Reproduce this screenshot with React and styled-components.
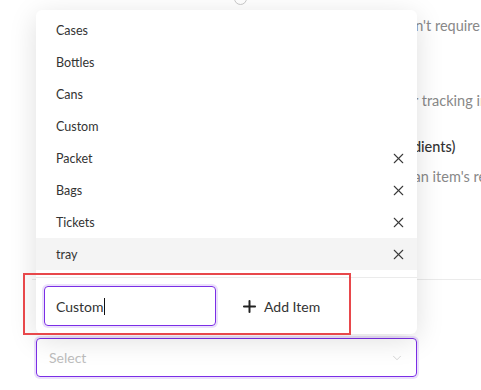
import React from "react";
import styled, { createGlobalStyle } from "styled-components";
import { X, Plus, ChevronDown } from "lucide-react";

const GlobalStyle = createGlobalStyle`
  body {
    margin: 0;
    background: #fff;
    font-family: "Lato", "Liberation Sans", sans-serif;
  }
`;

const Page = styled.div`
  position: relative;
  width: 481px;
  height: 390px;
  overflow: hidden;
  background: #fff;
`;

const Form = styled.div`
  display: flex;
  flex-direction: column;
  padding-left: 36px;
`;

const Radio = styled.div`
  width: 11px;
  height: 11px;
  margin: -8px 0 0 198px;
  border: 1.5px solid #c9c9c9;
  border-radius: 50%;
`;

const HintColumn = styled.div`
  display: flex;
  flex-direction: column;
  padding-left: 369px;
  white-space: nowrap;
`;

const Hint = styled.div`
  font-size: 14.5px;
  color: ${(p) => (p.$strong ? "#333" : "#888")};
  font-weight: ${(p) => (p.$strong ? 500 : 400)};
  margin-left: ${(p) => p.$shift || 0}px;
  margin-top: ${(p) => p.$gap || 0}px;
  line-height: 18px;
`;

const Divider = styled.div`
  margin: 93px 0 0 -4px;
  height: 1px;
  background: #ebebeb;
`;

const SelectBox = styled.div`
  margin-top: 58px;
  width: 381px;
  height: 39px;
  box-sizing: border-box;
  border: 1.5px solid #7b2ee6;
  border-radius: 4px;
  box-shadow: 0 0 0 2px rgba(123, 46, 230, 0.15);
  display: flex;
  align-items: center;
  justify-content: space-between;
  padding: 0 12px;
  color: #bdbdbd;
  font-size: 14px;
`;

const Menu = styled.div`
  position: absolute;
  left: 36px;
  top: 10px;
  width: 381px;
  background: #fff;
  border-radius: 6px;
  box-shadow: 0 6px 28px rgba(0, 0, 0, 0.13);
  display: flex;
  flex-direction: column;
`;

const List = styled.div`
  display: flex;
  flex-direction: column;
  padding: 4px 0 7px;
`;

const Item = styled.div`
  height: 32px;
  display: flex;
  align-items: center;
  justify-content: space-between;
  padding: 0 10px 0 20px;
  font-size: 12.5px;
  color: #333;
  background: ${(p) => (p.$active ? "#f4f4f4" : "transparent")};
`;

const RemoveIcon = styled(X)`
  color: #3a3a3a;
`;

const Footer = styled.div`
  display: flex;
  align-items: center;
  gap: 24px;
  padding: 8px 8px 8px;
  border-top: 1px solid #ebebeb;
`;

const Input = styled.div`
  width: 172px;
  height: 40px;
  box-sizing: border-box;
  border: 1.5px solid #7b2ee6;
  border-radius: 4px;
  box-shadow: 0 0 0 2px rgba(123, 46, 230, 0.15);
  display: flex;
  align-items: center;
  padding-left: 11px;
  font-size: 14px;
  color: #333;
`;

const Caret = styled.span`
  display: inline-block;
  width: 1.5px;
  height: 17px;
  background: #111;
`;

const AddButton = styled.div`
  display: flex;
  align-items: center;
  gap: 5px;
  font-size: 14px;
  color: #333;
`;

const Annotation = styled.div`
  position: absolute;
  left: 23px;
  top: 273px;
  width: 328px;
  height: 62px;
  box-sizing: border-box;
  border: 2px solid #e8484b;
`;

const items = [
  { label: "Cases" },
  { label: "Bottles" },
  { label: "Cans" },
  { label: "Custom" },
  { label: "Packet", removable: true },
  { label: "Bags", removable: true },
  { label: "Tickets", removable: true },
  { label: "tray", removable: true, active: true },
];

export default function App() {
  return (
    <>
      <GlobalStyle />
      <Page>
        <Form>
          <Radio />
          <HintColumn>
            <Hint $gap={12} $shift={-4}>can't require the</Hint>
            <Hint $gap={57} $shift={-5}>for tracking in</Hint>
            <Hint $gap={28} $shift={-24} $strong>ingredients)</Hint>
            <Hint $gap={12} $shift={-8}>of an item's re</Hint>
          </HintColumn>
          <Divider />
          <SelectBox>
            Select
            <ChevronDown size={14} strokeWidth={1.2} color="#c4c4c4" />
          </SelectBox>
        </Form>

        <Menu>
          <List>
            {items.map((it) => (
              <Item key={it.label} $active={it.active}>
                {it.label}
                {it.removable && <RemoveIcon size={17} strokeWidth={1.5} />}
              </Item>
            ))}
          </List>
          <Footer>
            <Input>
              Custom
              <Caret />
            </Input>
            <AddButton>
              <Plus size={19} strokeWidth={2.5} color="#222" />
              Add Item
            </AddButton>
          </Footer>
        </Menu>
        <Annotation />
      </Page>
    </>
  );
}
